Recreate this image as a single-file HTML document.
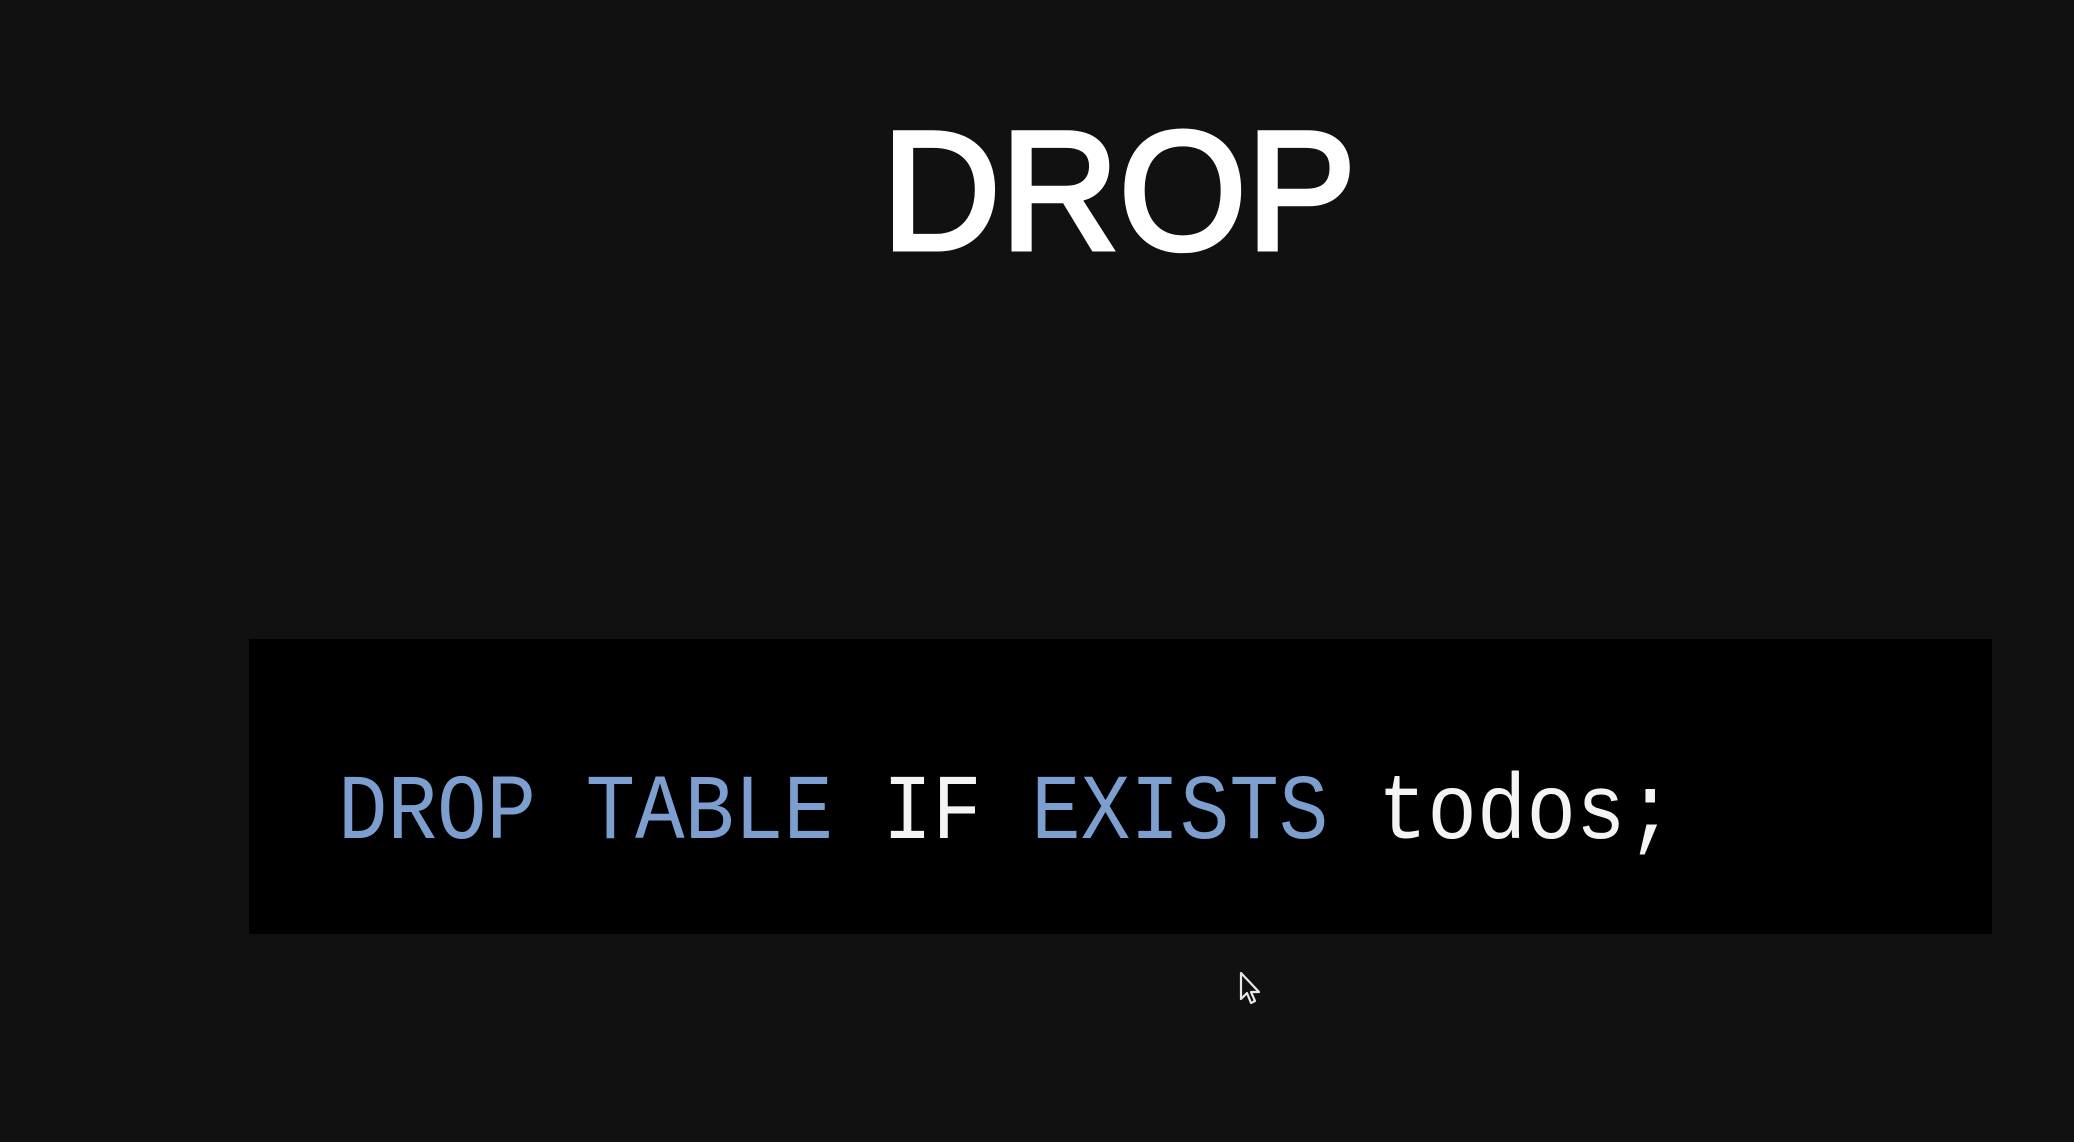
<!DOCTYPE html>
<html><head><meta charset="utf-8"><style>
html,body{margin:0;padding:0;background:#111111;overflow:hidden}
svg{display:block}
</style></head><body>
<svg width="2074" height="1142" viewBox="0 0 2074 1142" xmlns="http://www.w3.org/2000/svg">
<rect width="2074" height="1142" fill="#111111"/>
<text x="882" y="249" font-family="Liberation Sans, sans-serif" font-size="169" fill="#ffffff" stroke="#ffffff" stroke-width="5" textLength="474" lengthAdjust="spacingAndGlyphs">DROP</text>
<rect x="249" y="639" width="1743" height="295" fill="#000000"/>
<g transform="translate(0,838) scale(1,1.13) translate(0,-838)">
<text x="338" y="838" font-family="Liberation Mono, monospace" font-size="82.5" fill="#7d9fcf" textLength="1337" lengthAdjust="spacing"><tspan>DROP TABLE </tspan><tspan fill="#f4f4f4">IF </tspan><tspan>EXISTS </tspan><tspan fill="#f4f4f4">todos;</tspan></text>
</g>
<path d="M1241 973 L1241 999 L1247 993 L1251 1003 L1255 1001 L1251 992 L1259 992 Z" fill="#111" stroke="#e8e8e8" stroke-width="2.2" stroke-linejoin="round"/>
</svg>
</body></html>
